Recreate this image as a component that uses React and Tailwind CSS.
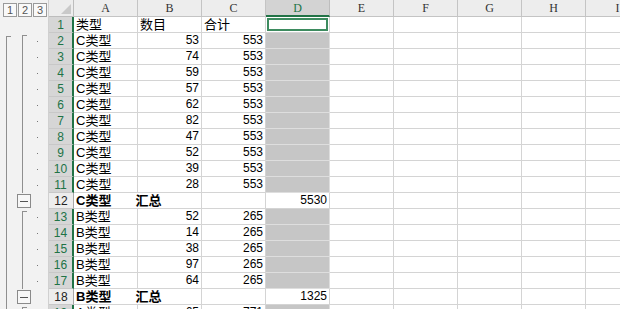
import React from "react";

const COLS = ["A", "B", "C", "D", "E", "F", "G", "H", "I"];
const cNums = [53, 74, 59, 57, 62, 82, 47, 52, 39, 28];
const bNums = [52, 14, 38, 97, 64];

const rows = [
  { n: 1, a: "类型", b: "数目", c: "合计", sel: true, active: true, ol: null },
  ...cNums.map((v, i) => ({
    n: i + 2,
    a: "C类型",
    b: v,
    c: 553,
    sel: true,
    ol: { l1: i === 0 ? "start" : "full", l2: i === 0 ? "start" : "full", dot: true },
  })),
  { n: 12, a: "C类型", sum: "汇总", d: 5530, ol: { l1: "full", l2: "sum" } },
  ...bNums.map((v, i) => ({
    n: i + 13,
    a: "B类型",
    b: v,
    c: 265,
    sel: true,
    ol: { l1: "full", l2: i === 0 ? "start" : "full", dot: true },
  })),
  { n: 18, a: "B类型", sum: "汇总", d: 1325, ol: { l1: "full", l2: "sum" } },
  { n: 19, a: "A类型", b: 65, c: 771, sel: true, ol: { l1: "full", l2: "start", dot: true } },
];

const cjk = "font-['Liberation_Sans','Noto_Sans_CJK_SC',sans-serif]";

function Outline({ ol }) {
  if (!ol) return <div className="w-[49px] h-full shrink-0 bg-[#f2f2f2] border-r border-[#d0d0d0]" />;
  return (
    <div className="w-[49px] h-full shrink-0 bg-[#f2f2f2] border-r border-[#d0d0d0]">
      <svg width="48" height="16" className="block">
        <g stroke="#8f8f8f" strokeWidth="1" fill="none" shapeRendering="crispEdges">
          {ol.l1 === "start" && <path d="M6.5 3 V16 M6.5 3.5 H11" />}
          {ol.l1 === "full" && <path d="M6.5 0 V16" />}
          {ol.l2 === "start" && <path d="M22.5 2 V16 M22.5 2.5 H27" />}
          {ol.l2 === "full" && <path d="M22.5 0 V16" />}
          {ol.l2 === "sum" && (
            <>
              <rect x="17.5" y="1.5" width="13" height="13" fill="#f7f7f7" stroke="#8a8a8a" />
              <path d="M20 8.5 H28" stroke="#555" />
            </>
          )}
        </g>
        {ol.dot && <rect x="37" y="8" width="1" height="1" fill="#777" />}
      </svg>
    </div>
  );
}

function Row({ r }) {
  const sel = r.sel;
  return (
    <div className="flex h-[16px]">
      <Outline ol={r.ol} />
      <div
        className={`w-[25px] shrink-0 flex items-center justify-center text-[12px] font-['Liberation_Sans',sans-serif] border-b border-[#c8c8c8] ${
          sel
            ? "bg-[#d6d6d6] text-[#217346] border-r-2 border-r-[#217346]"
            : "bg-[#ededed] text-[#222] border-r border-r-[#a8a8a8]"
        }`}
      >
        {r.n}
      </div>
      {/* A */}
      {r.sum ? (
        <div className={`w-[64px] shrink-0 flex items-end pl-[2px] text-[13px] leading-[15px] text-black whitespace-nowrap font-bold relative z-10 ${cjk} border-b border-[#d4d4d4]`}>
          <span>{r.a}</span>
          <span className="ml-[24px]">{r.sum}</span>
        </div>
      ) : (
        <div className={`w-[64px] shrink-0 flex items-end pl-[2px] text-[13px] leading-[15px] text-black ${cjk} border-b border-r border-[#d4d4d4]`}>
          {r.a}
        </div>
      )}
      {/* B */}
      <div
        className={`w-[64px] shrink-0 flex items-end leading-[15px] text-black ${cjk} border-b border-r border-[#d4d4d4] ${
          typeof r.b === "number" ? "justify-end pr-[2px] text-[12px]" : "pl-[2px] text-[13px]"
        }`}
      >
        {r.b}
      </div>
      {/* C */}
      <div
        className={`w-[64px] shrink-0 flex items-end leading-[15px] text-black ${cjk} border-b border-r border-[#d4d4d4] ${
          typeof r.c === "number" ? "justify-end pr-[2px] text-[12px]" : "pl-[2px] text-[13px]"
        }`}
      >
        {r.c}
      </div>
      {/* D */}
      {r.active ? (
        <div className="w-[64px] shrink-0 border-b border-r border-[#d4d4d4] p-[1px]">
          <div className="w-full h-full border-2 border-[#3d8b5f] bg-white" />
        </div>
      ) : sel ? (
        <div className="w-[64px] shrink-0 border-b border-r border-[#dedede] bg-[#c6c6c6]" />
      ) : (
        <div className="w-[64px] shrink-0 flex items-end justify-end pr-[2px] text-[12px] leading-[15px] text-black font-['Liberation_Sans',sans-serif] border-b border-r border-[#d4d4d4]">
          {r.d}
        </div>
      )}
      {COLS.slice(4).map((c) => (
        <div key={c} className="w-[64px] shrink-0 border-b border-r border-[#d4d4d4]" />
      ))}
    </div>
  );
}

export default function App() {
  return (
    <div className="w-[620px] h-[309px] overflow-hidden bg-white select-none">
      <div className="w-[650px]">
        {/* header row */}
        <div className="flex h-[17px]">
          <div className="w-[49px] shrink-0 bg-[#f2f2f2] border-r border-[#d0d0d0] flex items-start gap-[1px] pt-[3px] pl-[3px]">
            {["1", "2", "3"].map((l) => (
              <div
                key={l}
                className="w-[14px] h-[14px] border border-[#9a9a9a] bg-[#f9f9f9] flex items-center justify-center text-[11px] leading-none text-[#555] font-['Liberation_Sans',sans-serif]"
              >
                {l}
              </div>
            ))}
          </div>
          <div className="w-[25px] shrink-0 bg-[#ededed] border-r border-b border-[#bdbdbd] flex items-end justify-end pr-[2px] pb-[2px]">
            <svg width="10" height="10">
              <path d="M10 0 L10 10 L0 10 Z" fill="#c9c9c9" />
            </svg>
          </div>
          {COLS.map((c) => (
            <div
              key={c}
              className={`w-[64px] shrink-0 flex items-center justify-center text-[12px] font-['Liberation_Serif',serif] border-r ${
                c === "D"
                  ? "bg-[#d3d3d3] text-[#217346] border-b-2 border-b-[#217346] border-r-[#bdbdbd]"
                  : "bg-[#ededed] text-[#333] border-b border-[#c4c4c4]"
              }`}
            >
              {c}
            </div>
          ))}
        </div>
        {rows.map((r) => (
          <Row key={r.n} r={r} />
        ))}
      </div>
    </div>
  );
}
